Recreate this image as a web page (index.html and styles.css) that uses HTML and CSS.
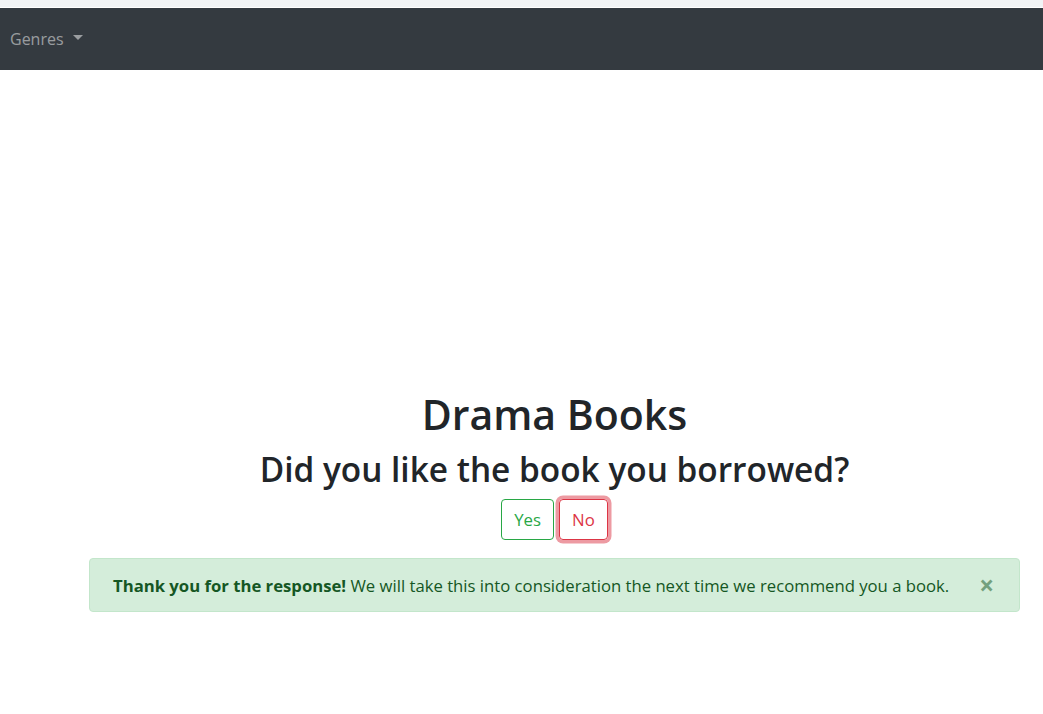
FILE: index.html
```html
<!DOCTYPE html>
<html lang="en">
<head>
<meta charset="utf-8">
<title>Drama Books</title>
<link rel="stylesheet" href="styles.css">
</head>
<body>
<div class="topstrip"></div>
<nav class="navbar">
  <a class="nav-link dropdown-toggle" href="#">Genres</a>
</nav>
<main class="container">
  <h1 class="title">Drama Books</h1>
  <h2 class="question">Did you like the book you borrowed?</h2>
  <div class="buttons">
    <button class="btn btn-yes">Yes</button>
    <button class="btn btn-no">No</button>
  </div>
  <div class="alert">
    <span class="alert-text"><strong>Thank you for the response!</strong> We will take this into consideration the next time we recommend you a book.</span>
    <button class="close" aria-label="Close">&times;</button>
  </div>
</main>
</body>
</html>
```
FILE: styles.css
```css
* { box-sizing: border-box; }
html, body { margin: 0; padding: 0; }
body {
  font-family: "Open Sans", "Noto Sans", sans-serif;
  font-size: 16.8px;
  line-height: 1.5;
  color: #212529;
  background: #fff;
}
.topstrip {
  height: 7px;
  background: #f1f3f5;
  border-bottom: 1px solid #ffffff;
  box-sizing: content-box;
}
.navbar {
  height: 62px;
  background: #343a40;
  display: flex;
  align-items: center;
  padding: 0 10px;
}
.nav-link {
  color: rgba(255,255,255,.5);
  text-decoration: none;
  font-size: 16px;
  display: flex;
  align-items: center;
}
.dropdown-toggle::after {
  content: "";
  display: inline-block;
  margin-left: 9px;
  border-top: 5px solid;
  border-right: 5px solid transparent;
  border-left: 5px solid transparent;
  margin-top: -3px;
}
.container {
  margin: 0 23px 0 89px;
  padding-top: 320px;
  display: flex;
  flex-direction: column;
  align-items: center;
}
.title {
  margin: 0;
  font-size: 41px;
  font-weight: 600;
  line-height: 1.2;
}
.question {
  margin: 10px 0 0;
  font-size: 33.4px;
  font-weight: 600;
  line-height: 1.2;
}
.buttons {
  display: flex;
  gap: 5px;
  margin-top: 10px;
}
.btn {
  font-family: inherit;
  font-size: 16.8px;
  line-height: 1.5;
  padding: 6px 12px;
  background: transparent;
  border: 1px solid;
  border-radius: 4px;
  cursor: pointer;
  height: 41px;
}
.btn-yes { color: #28a745; border-color: #28a745; }
.btn-no { color: #dc3545; border-color: #dc3545; box-shadow: 0 0 0 3.5px rgba(220,53,69,.5); }
.alert {
  align-self: stretch;
  margin-top: 18px;
  position: relative;
  background: #d4edda;
  border: 1px solid #c3e6cb;
  color: #155724;
  border-radius: 4px;
  padding: 13px 60px 13px 23px;
  height: 54px;
  display: flex;
  align-items: center;
}
.alert-text { white-space: nowrap; font-size: 16.7px; }
.alert strong { font-weight: 700; }
.close {
  position: absolute;
  right: 25px;
  top: 50%;
  transform: translateY(-50%);
  background: none;
  border: 0;
  padding: 0;
  font-family: inherit;
  font-size: 26px;
  font-weight: 700;
  line-height: 1;
  color: #155724;
  opacity: .5;
}
```
